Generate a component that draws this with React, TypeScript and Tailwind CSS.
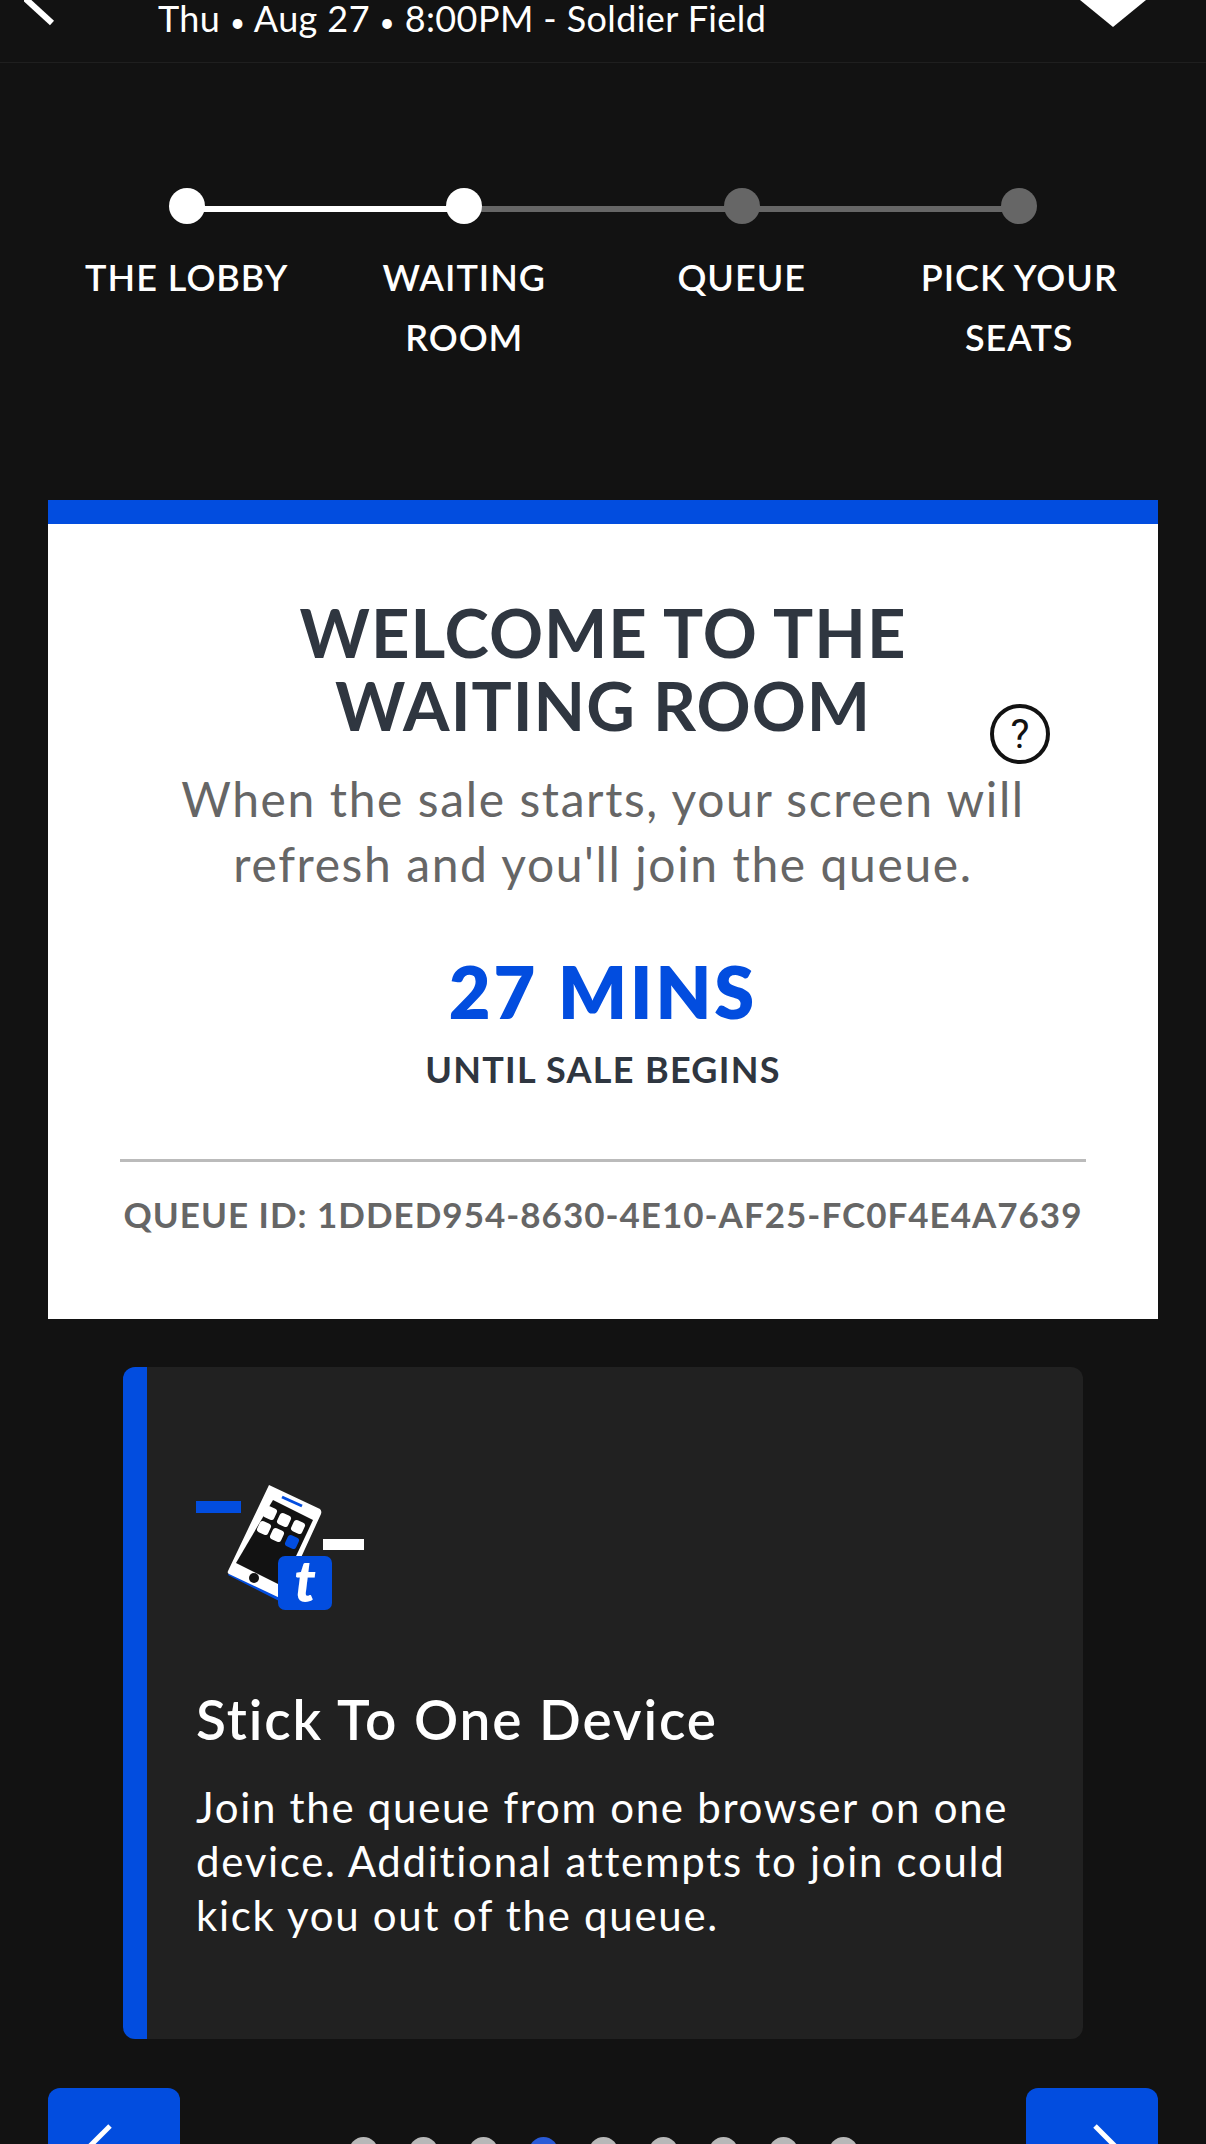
const font = { fontFamily: '"Lato", "Noto Sans", sans-serif' };

const steps = [
  { label: ["THE LOBBY"], done: true },
  { label: ["WAITING", "ROOM"], done: true },
  { label: ["QUEUE"], done: false },
  { label: ["PICK YOUR", "SEATS"], done: false },
];

function PhoneIcon() {
  return (
    <svg width="168" height="125" viewBox="45 45 168 125" className="block">
      <rect x="45" y="61" width="45" height="12" fill="#024ddf" />
      <rect x="172" y="99" width="41" height="11" fill="#ffffff" />
      <path d="M77 135 L132 163 L140 150 L84 124 Z" fill="#024ddf" />
      <path d="M118 45 L169 69 Q171 71 170 74 L131 159 L78 134 Q76 133 77 131 Z" fill="#ffffff" />
      <path d="M122 60 L162 80 L131 146 L85 123 Z" fill="#121212" />
      <path d="M131 57 L151 66" stroke="#024ddf" strokeWidth="3" />
      <g fill="#ffffff">
        <rect x="113" y="67" width="12" height="12" rx="3" transform="rotate(25 119 73)" />
        <rect x="127" y="74" width="12" height="12" rx="3" transform="rotate(25 133 80)" />
        <rect x="141" y="81" width="12" height="12" rx="3" transform="rotate(25 147 87)" />
        <rect x="107" y="82" width="12" height="12" rx="3" transform="rotate(25 113 88)" />
        <rect x="120" y="89" width="12" height="12" rx="3" transform="rotate(25 126 95)" />
      </g>
      <rect x="135" y="96" width="12" height="12" rx="3" transform="rotate(25 141 102)" fill="#024ddf" />
      <circle cx="103" cy="138" r="5" fill="#121212" />
      <rect x="127" y="116" width="54" height="54" rx="7" fill="#024ddf" />
      <text x="154" y="162" textAnchor="middle" fill="#ffffff" fontSize="58" fontWeight="900" fontStyle="italic" style={font}>t</text>
    </svg>
  );
}

export default function App() {
  return (
    <div style={font} className="h-[2144px] w-[1206px] overflow-hidden bg-[#121212] text-white">
      {/* Header */}
      <header className="flex h-[63px] items-start justify-between overflow-hidden border-b border-[#1f1f1f] pr-[60px] pl-[24px]">
        <svg width="34" height="26" viewBox="0 0 34 26" className="shrink-0">
          <path d="M-8 -10 L28 23" stroke="#ffffff" strokeWidth="6" fill="none" />
        </svg>
        <p className="ml-[100px] flex-1 text-[36px] leading-[36px] tracking-[0.4px]">
          Thu <span className="text-[26px]">•</span> Aug 27 <span className="text-[26px]">•</span> 8:00PM - Soldier Field
        </p>
        <svg width="66" height="27" viewBox="0 0 66 27" className="shrink-0">
          <path d="M0 0 H66 L33 27 Z" fill="#ffffff" />
        </svg>
      </header>

      {/* Progress */}
      <section className="relative mt-[125px] grid grid-cols-4 px-[48px]">
        <div className="absolute top-[18px] left-[187px] h-[6px] w-[277px] bg-white" />
        <div className="absolute top-[18px] left-[464px] h-[6px] w-[555px] bg-[#666666]" />
        {steps.map((step) => (
          <div key={step.label[0]} className="relative flex flex-col items-center">
            <span className={`h-[36px] w-[36px] rounded-full ${step.done ? "bg-white" : "bg-[#666666]"}`} />
            <div className="mt-[23px] text-center text-[36px] leading-[60px] font-semibold tracking-[1px]">
              {step.label.map((line) => (
                <div key={line}>{line}</div>
              ))}
            </div>
          </div>
        ))}
      </section>

      {/* Waiting room card */}
      <section className="relative mx-[48px] mt-[133px] h-[819px] border-t-[24px] border-[#024ddf] bg-white text-center">
        <h1 className="pt-[72px] text-[67px] leading-[73px] font-bold tracking-[1px] text-[#2f3640]">
          WELCOME TO THE
          <br />
          WAITING ROOM
        </h1>
        <p className="mt-[24px] text-[48px] leading-[65px] tracking-[1.6px] text-[#666666]">
          When the sale starts, your screen will
          <br />
          refresh and you'll join the queue.
        </p>
        <div className="mt-[55px] text-[72px] leading-[80px] font-extrabold tracking-[3px] text-[#024ddf]">27 MINS</div>
        <div className="mt-[16px] text-[36px] leading-[44px] font-bold tracking-[1.3px] text-[#2f3640]">UNTIL SALE BEGINS</div>
        <div className="mx-[72px] mt-[68px] border-t-[3px] border-[#bbbbbb]" />
        <div className="mt-[30px] text-[35px] leading-[44px] font-bold tracking-[1px] text-[#666666]">QUEUE ID: 1DDED954-8630-4E10-AF25-FC0F4E4A7639</div>

        <svg width="60" height="60" viewBox="0 0 60 60" className="absolute top-[180px] left-[942px]">
          <circle cx="30" cy="30" r="28" fill="#ffffff" stroke="#121212" strokeWidth="4" />
          <text x="30" y="44" textAnchor="middle" fontSize="40" fill="#121212" style={{ fontFamily: '"Roboto", sans-serif' }}>?</text>
        </svg>
      </section>

      {/* Tip card */}
      <section className="mx-[123px] mt-[48px] h-[672px] rounded-[12px] border-l-[24px] border-[#024ddf] bg-[#212121] pt-[118px] pl-[49px]">
        <PhoneIcon />
        <h2 className="mt-[77px] text-[55px] leading-[64px] font-semibold tracking-[1.9px]">Stick To One Device</h2>
        <p className="mt-[29px] text-[42px] leading-[54px] tracking-[1.7px]">
          Join the queue from one browser on one
          <br />
          device. Additional attempts to join could
          <br />
          kick you out of the queue.
        </p>
      </section>

      {/* Carousel controls */}
      <nav className="mx-[48px] mt-[49px] flex items-start justify-between">
        <button className="flex h-[120px] w-[132px] items-start rounded-[12px] bg-[#024ddf] pt-[36px] pl-[34px]">
          <svg width="34" height="32" viewBox="0 0 34 32" className="block">
            <path d="M28 2 L0 30" stroke="#ffffff" strokeWidth="5" fill="none" />
          </svg>
        </button>
        <div className="mt-[49px] flex gap-[31px]">
          {[0, 1, 2, 3, 4, 5, 6, 7, 8].map((i) => (
            <span key={i} className={`h-[29px] w-[29px] rounded-full ${i === 3 ? "bg-[#2a5bd7]" : "bg-[#b8b8b8]"}`} />
          ))}
        </div>
        <button className="flex h-[120px] w-[132px] items-start rounded-[12px] bg-[#024ddf] pt-[36px] pl-[67px]">
          <svg width="34" height="32" viewBox="0 0 34 32" className="block">
            <path d="M2 2 L30 30" stroke="#ffffff" strokeWidth="5" fill="none" />
          </svg>
        </button>
      </nav>
    </div>
  );
}
